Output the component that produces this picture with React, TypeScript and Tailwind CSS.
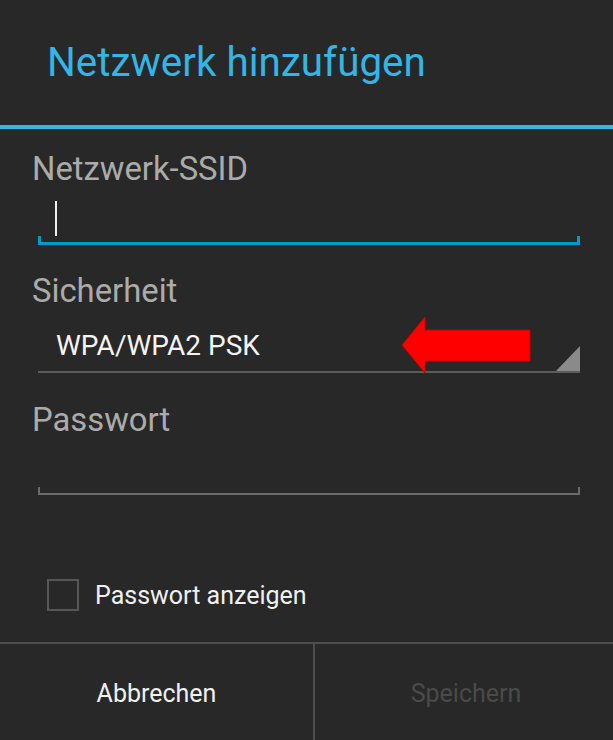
const font = { fontFamily: 'Roboto, "Liberation Sans", sans-serif' }

const FieldLine = ({ active }: { active?: boolean }) => (
  <div
    className={
      active
        ? 'h-[9px] border-x-[3px] border-b-[3px] border-[#0099cc]'
        : 'h-[8px] border-x-2 border-b-2 border-[#6b6b6b]'
    }
  />
)

const Label = ({ text, className }: { text: string; className: string }) => (
  <div className={`pl-[32px] text-[32.8px] leading-[33px] text-[#ababab] ${className}`}>{text}</div>
)

export default function App() {
  return (
    <div style={font} className="flex h-[740px] w-[613px] flex-col overflow-hidden bg-[#282828]">
      <div className="h-[125px] pl-[47px] pt-[43px]">
        <h1 className="text-[40.4px] leading-[40px] font-normal text-[#33b5e5]">Netzwerk hinzufügen</h1>
      </div>
      <div className="h-[4px] bg-[#33b5e5]" />

      <Label text="Netzwerk-SSID" className="mt-[24px]" />
      <div className="ml-[38px] mr-[33px] -mt-[2px] flex flex-col">
        <div className="h-[52px] pl-[17px] pt-[17px]">
          <div className="h-[35px] w-[2px] bg-[#f0f0f0]" />
        </div>
        <FieldLine active />
      </div>

      <Label text="Sicherheit" className="mt-[30px]" />
      <div className="relative ml-[38px] mr-[33px] -mt-[1px] flex h-[66px] justify-between border-b-2 border-[#5c5c5c]">
        <span className="pl-[18px] pt-[25px] text-[28px] leading-[28px] text-[#f4f4f4]">WPA/WPA2 PSK</span>
        <svg width="24" height="25" viewBox="0 0 24 25" className="self-end">
          <polygon points="24,0 24,25 0,25" fill="#8a8a8a" />
        </svg>
        <svg width="132" height="60" viewBox="0 0 132 60" className="absolute left-[362px] top-[8px]">
          <polygon
            points="2,30 25,2 25,15 130,15 130,46 25,46 25,58"
            fill="#ff0000"
            stroke="#c80000"
            strokeWidth="1"
          />
        </svg>
      </div>

      <Label text="Passwort" className="mt-[31px]" />
      <div className="ml-[38px] mr-[33px] -mt-[2px] flex flex-col">
        <div className="h-[52px]" />
        <FieldLine />
      </div>

      <div className="ml-[47px] mt-[83px] flex items-center">
        <div className="h-[32px] w-[32px] border-2 border-[#565656]" />
        <span className="ml-[16px] pt-[2px] text-[25px] leading-[32px] text-[#f0f0f0]">Passwort anzeigen</span>
      </div>

      <div className="flex-1" />
      <div className="flex h-[98px] border-t-2 border-[#4e4e4e]">
        <div className="flex w-[313px] items-center justify-center pt-[3px] text-[25px] leading-[32px] text-[#f0f0f0]">
          Abbrechen
        </div>
        <div className="w-[2px] bg-[#4e4e4e]" />
        <div className="flex flex-1 items-center justify-center pt-[3px] pl-[4px] text-[25px] leading-[32px] text-[#4a4a4a]">
          Speichern
        </div>
      </div>
    </div>
  )
}
